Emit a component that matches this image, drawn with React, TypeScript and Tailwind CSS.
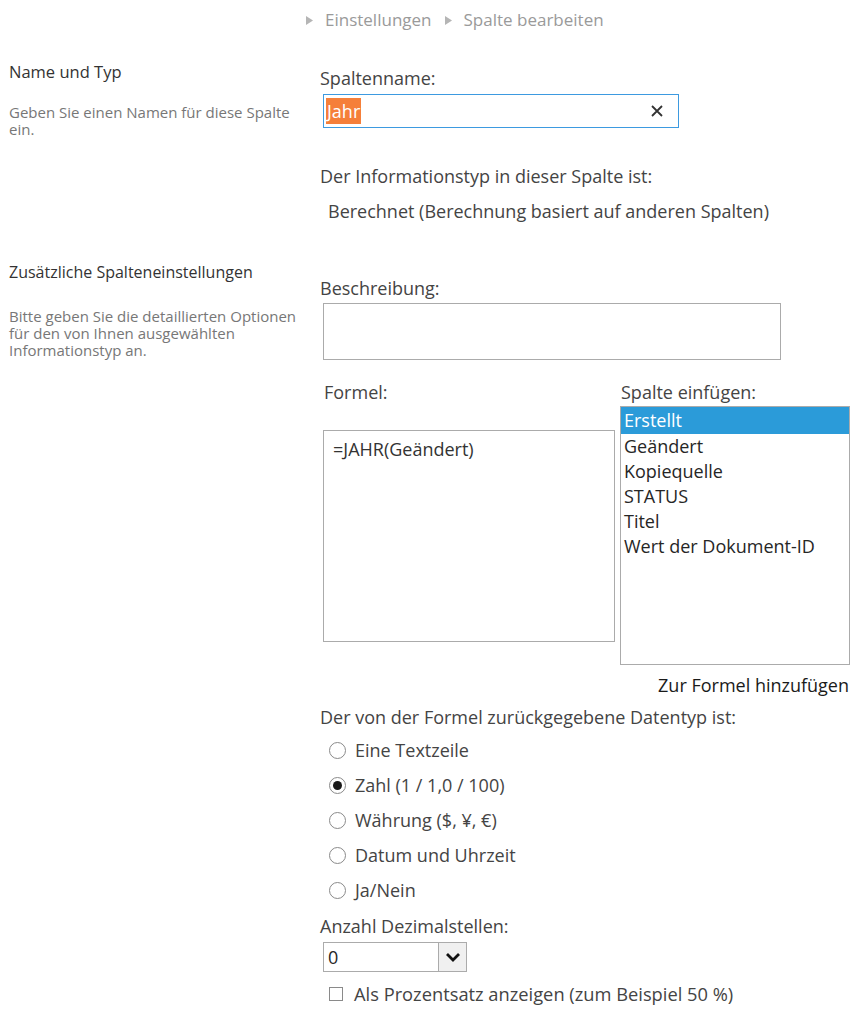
import React from "react";

const font = { fontFamily: '"Open Sans", "Noto Sans", sans-serif' };

const columns = ["Erstellt", "Geändert", "Kopiequelle", "STATUS", "Titel", "Wert der Dokument-ID"];

const types = [
  "Eine Textzeile",
  "Zahl (1 / 1,0 / 100)",
  "Währung ($, ¥, €)",
  "Datum und Uhrzeit",
  "Ja/Nein",
];

function Radio({ checked }: { checked?: boolean }) {
  return (
    <span className="inline-flex size-[17px] items-center justify-center rounded-full border border-[#8a8a8a] bg-white">
      {checked && <span className="size-[9px] rounded-full bg-[#1a1a1a]" />}
    </span>
  );
}

function Crumb({ children }: { children: React.ReactNode }) {
  return (
    <span className="flex items-center gap-[12px]">
      <svg width="7" height="9" viewBox="0 0 7 9" className="text-[#b5b5b5]">
        <path d="M0 0 L7 4.5 L0 9 Z" fill="currentColor" />
      </svg>
      <span>{children}</span>
    </span>
  );
}

export default function App() {
  return (
    <div style={font} className="w-[864px] h-[1024px] bg-white text-[#444] overflow-hidden">
      <div className="flex items-center gap-[13px] pl-[306px] pt-[8px] h-[32px] text-[17px] text-[#9a9a9a]">
        <Crumb>Einstellungen</Crumb>
        <Crumb>Spalte bearbeiten</Crumb>
      </div>

      {/* Name und Typ */}
      <div className="grid grid-cols-[311px_1fr] mt-[28px]">
        <div className="pl-[9px] pr-[8px]">
          <p className="text-[16.5px] text-[#333] leading-[24px]">Name und Typ</p>
          <p className="mt-[20px] text-[15px] text-[#777] leading-[17px]">
            Geben Sie einen Namen für diese Spalte ein.
          </p>
        </div>
        <div className="pl-[9px] text-[18px] leading-[24px]">
          <p className="mt-[6px]">Spaltenname:</p>
          <div className="mt-[4px] ml-[3px] flex items-center w-[356px] h-[34px] border border-[#3d9ae0] pl-[2px] pr-[15px]">
            <span className="bg-[#f57f3a] text-white leading-[26px] px-px">Jahr</span>
            <span className="flex-1" />
            <svg width="12" height="12" viewBox="0 0 12 12">
              <path d="M1 1 L11 11 M11 1 L1 11" stroke="#333" strokeWidth="1.8" />
            </svg>
          </div>
          <p className="mt-[36px]">Der Informationstyp in dieser Spalte ist:</p>
          <p className="mt-[11px] ml-[8px]">Berechnet (Berechnung basiert auf anderen Spalten)</p>
        </div>
      </div>

      {/* Zusätzliche Spalteneinstellungen */}
      <div className="grid grid-cols-[311px_1fr] mt-[37px]">
        <div className="pl-[9px] pr-[8px]">
          <p className="text-[16px] text-[#333] leading-[24px]">Zusätzliche Spalteneinstellungen</p>
          <p className="mt-[24px] text-[15px] text-[#777] leading-[17px]">
            Bitte geben Sie die detaillierten Optionen für den von Ihnen ausgewählten Informationstyp an.
          </p>
        </div>
        <div className="pl-[9px] text-[18px] leading-[24px]">
          <p className="mt-[16px]">Beschreibung:</p>
          <div className="mt-[3px] ml-[3px] w-[458px] h-[57px] border border-[#ababab]" />

          <div className="flex mt-[20px] ml-[3px]">
            <div className="w-[297px]">
              <p className="ml-px">Formel:</p>
              <div className="mt-[26px] w-[292px] h-[212px] border border-[#ababab] px-[9px] pt-[6px] text-[#333]">
                =JAHR(Geändert)
              </div>
            </div>
            <div className="w-[230px]">
              <p className="ml-px">Spalte einfügen:</p>
              <div className="mt-[2px] w-[230px] h-[259px] border border-[#ababab]">
                {columns.map((c, i) => (
                  <div
                    key={c}
                    className={
                      i === 0
                        ? "bg-[#2b9bd9] text-white h-[27px] pl-[3px] leading-[27px]"
                        : "text-[#262626] h-[25px] pl-[3px] leading-[25px]"
                    }
                  >
                    {c}
                  </div>
                ))}
              </div>
              <p className="mt-[8px] text-right text-[#1a1a1a] mr-[1px]">Zur Formel hinzufügen</p>
            </div>
          </div>

          <p className="mt-[8px]">Der von der Formel zurückgegebene Datentyp ist:</p>
          <div className="mt-[9px] flex flex-col gap-[11px] pl-[9px]">
            {types.map((t, i) => (
              <label key={t} className="flex items-center gap-[9px] h-[24px]">
                <Radio checked={i === 1} />
                <span>{t}</span>
              </label>
            ))}
          </div>

          <p className="mt-[12px]">Anzahl Dezimalstellen:</p>
          <div className="mt-[4px] ml-[3px] flex w-[144px] h-[30px] border border-[#ababab]">
            <span className="flex-1 pl-[4px] leading-[28px] text-[#262626]">0</span>
            <span className="w-[28px] flex items-center justify-center border-l border-[#ababab] bg-[#f0f0f0]">
              <svg width="16" height="10" viewBox="0 0 16 10">
                <path d="M2 2 L8 8 L14 2" fill="none" stroke="#111" strokeWidth="2.8" />
              </svg>
            </span>
          </div>
          <label className="mt-[10px] ml-[9px] flex items-center gap-[11px]">
            <span className="size-[14px] border border-[#8a8a8a] bg-white" />
            <span className="text-[18.3px]">Als Prozentsatz anzeigen (zum Beispiel 50 %)</span>
          </label>
        </div>
      </div>
    </div>
  );
}
